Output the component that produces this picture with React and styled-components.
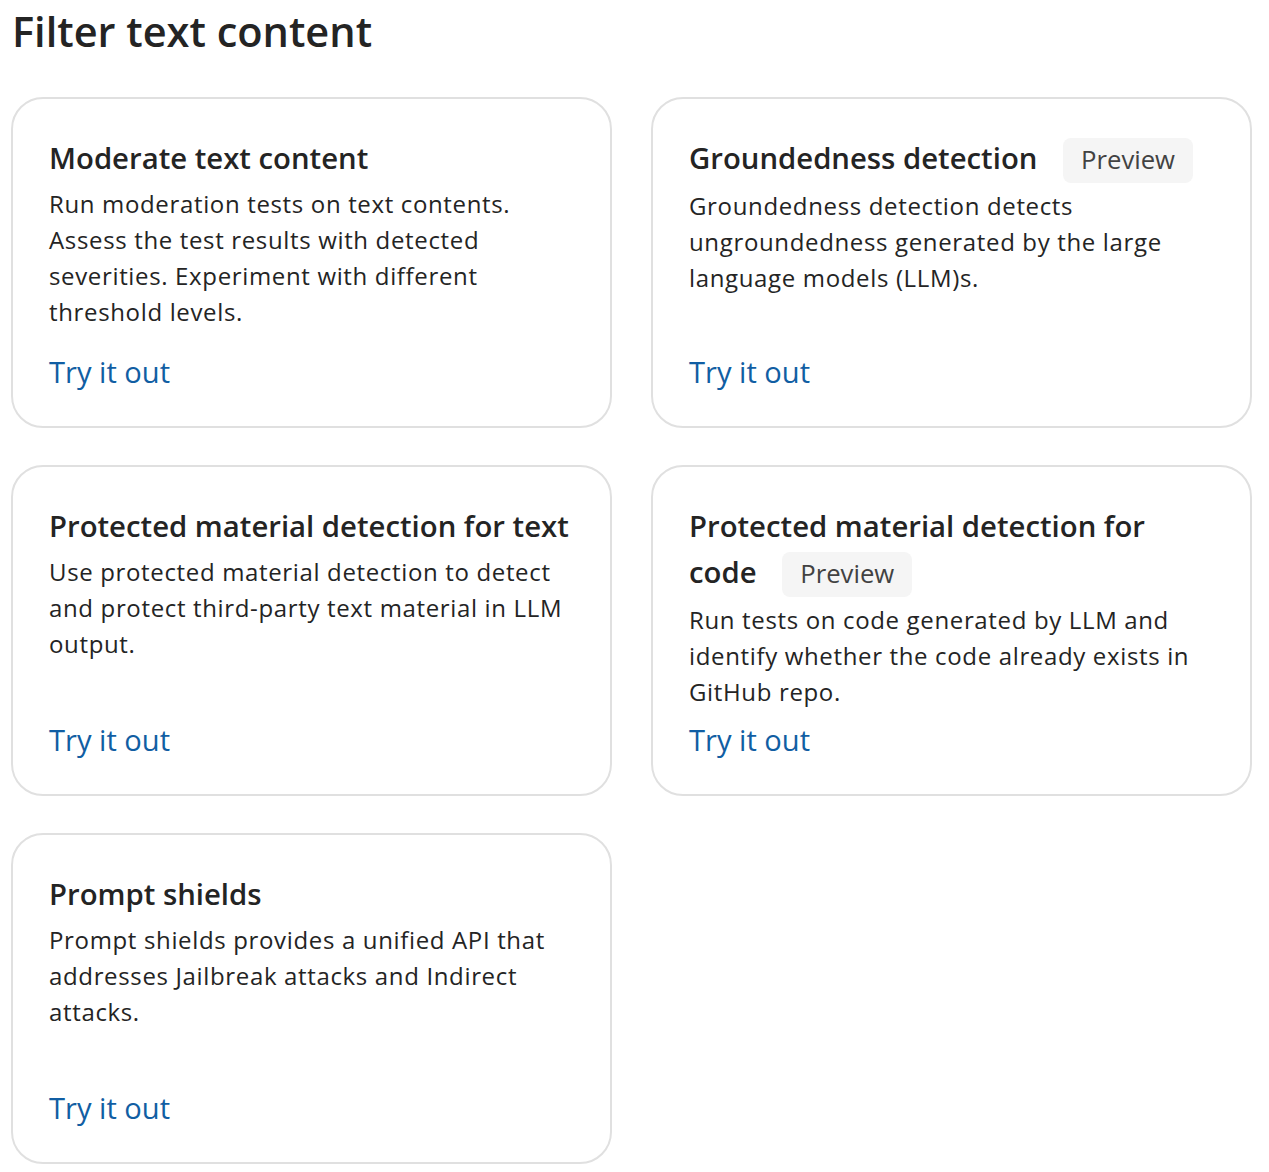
import React from "react";
import styled, { createGlobalStyle } from "styled-components";

const GlobalStyle = createGlobalStyle`
  body {
    margin: 0;
    background: #ffffff;
    font-family: "Open Sans", "Noto Sans", sans-serif;
    color: #242424;
  }
`;

const tools = [
  {
    title: "Moderate text content",
    text: "Run moderation tests on text contents. Assess the test results with detected severities. Experiment with different threshold levels.",
  },
  {
    title: "Groundedness detection",
    preview: true,
    text: "Groundedness detection detects ungroundedness generated by the large language models (LLM)s.",
  },
  {
    title: "Protected material detection for text",
    text: "Use protected material detection to detect and protect third-party text material in LLM output.",
  },
  {
    title: "Protected material detection for code",
    preview: true,
    text: "Run tests on code generated by LLM and identify whether the code already exists in GitHub repo.",
  },
  {
    title: "Prompt shields",
    text: "Prompt shields provides a unified API that addresses Jailbreak attacks and Indirect attacks.",
  },
];

function App() {
  return (
    <Page>
      <GlobalStyle />
      <Heading>Filter text content</Heading>
      <CardGrid>
        {tools.map((tool) => (
          <Card key={tool.title}>
            <CardTitle>
              {tool.title}
              {tool.preview && (
                <>
                  {" "}
                  <Badge>Preview</Badge>
                </>
              )}
            </CardTitle>
            <CardText>{tool.text}</CardText>
            <TryLink href="#">Try it out</TryLink>
          </Card>
        ))}
      </CardGrid>
    </Page>
  );
}

export default App;

const Page = styled.div`
  padding: 3px 0 8px 11px;
`;

const Heading = styled.h1`
  margin: 0 0 38px 1px;
  font-size: 41.5px;
  line-height: 56px;
  font-weight: 600;
  color: #242424;
`;

const CardGrid = styled.div`
  display: grid;
  grid-template-columns: repeat(2, 601px);
  column-gap: 39px;
  row-gap: 37px;
`;

const Card = styled.div`
  box-sizing: border-box;
  height: 331px;
  display: flex;
  flex-direction: column;
  padding: 36px 36px 33px;
  border: 2px solid #e0e0e0;
  border-radius: 32px;
  background: #ffffff;
`;

const CardTitle = styled.h3`
  margin: 0;
  font-size: 29.3px;
  line-height: 46px;
  font-weight: 600;
  color: #242424;
`;

const Badge = styled.span`
  display: inline-flex;
  align-items: center;
  box-sizing: border-box;
  height: 45px;
  margin-left: 18px;
  padding: 0 18px;
  border-radius: 8px;
  background: #f5f5f5;
  color: #424242;
  font-size: 25.7px;
  line-height: 36px;
  font-weight: 400;
`;

const CardText = styled.p`
  margin: 5px 0 0;
  font-size: 24px;
  line-height: 36px;
  letter-spacing: 0.65px;
  color: #242424;
`;

const TryLink = styled.a`
  margin-top: auto;
  align-self: flex-start;
  font-size: 29.1px;
  line-height: 42px;
  color: #115ea3;
  text-decoration: none;
`;
